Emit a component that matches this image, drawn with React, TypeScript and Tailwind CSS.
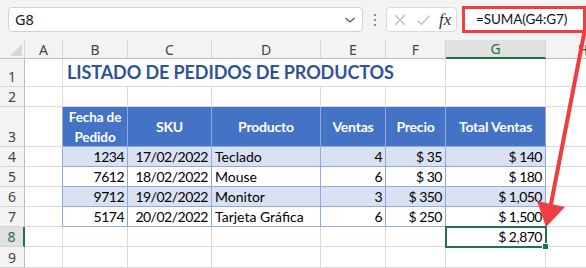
import React from "react";

const F = "font-['Lato',sans-serif]";
const UI = "font-['Noto_Sans',sans-serif]";

type Row = [string, string, string, string, string, string];
const data: Row[] = [
  ["1234", "17/02/2022", "Teclado", "4", "$ 35", "$ 140"],
  ["7612", "18/02/2022", "Mouse", "6", "$ 30", "$ 180"],
  ["9712", "19/02/2022", "Monitor", "3", "$ 350", "$ 1,050"],
  ["5174", "20/02/2022", "Tarjeta Gráfica", "6", "$ 250", "$ 1,500"],
];

function RowHead({ n, active }: { n: number; active?: boolean }) {
  return active ? (
    <div className={`${UI} flex items-end justify-center border-b border-b-[#d4d4d4] border-r-2 border-r-[#217346] bg-[#e1e1e1] text-[14px] leading-[19px] text-[#217346]`}>
      {n}
    </div>
  ) : (
    <div className={`${UI} flex items-end justify-center border-b border-r border-b-[#d4d4d4] border-r-[#bdbdbd] bg-[#f3f3f3] text-[14px] leading-[19px] text-[#444]`}>
      {n}
    </div>
  );
}

const grid = "border-r border-b border-[#dadada] bg-white";

export default function App() {
  return (
    <div className="relative h-[268px] w-[586px] overflow-hidden bg-[#f3f3f3]">
      {/* formula bar */}
      <div className="flex h-[40px] items-start pl-[8px] pt-[7px]">
        <div className="flex h-[25px] w-[355px] items-center justify-between rounded-[4px] border border-[#d2d2d2] bg-white pl-[6px] pr-[6px]">
          <span className={`${UI} text-[14.5px] text-[#222]`}>G8</span>
          <svg width="12" height="8" viewBox="0 0 12 8">
            <path d="M1.5 2 L6 6 L10.5 2" fill="none" stroke="#555" strokeWidth="1.3" />
          </svg>
        </div>
        <div className="flex h-[25px] w-[23px] flex-col items-center justify-center gap-[3px]">
          <span className="h-[2px] w-[2px] bg-[#8a8a8a]" />
          <span className="h-[2px] w-[2px] bg-[#8a8a8a]" />
          <span className="h-[2px] w-[2px] bg-[#8a8a8a]" />
        </div>
        <div className="flex h-[25px] w-[71px] items-center rounded-[4px] border border-[#dcdcdc] bg-white pl-[6px]">
          <svg width="14" height="14" viewBox="0 0 14 14">
            <path d="M2 2 L12 12 M12 2 L2 12" stroke="#bdbdbd" strokeWidth="1.2" fill="none" />
          </svg>
          <svg className="ml-[9px]" width="15" height="14" viewBox="0 0 15 14">
            <path d="M1.5 7.5 L5.5 11.5 L13.5 2.5" stroke="#bdbdbd" strokeWidth="1.2" fill="none" />
          </svg>
          <span className="ml-[8px] font-['Liberation_Serif',serif] text-[17px] italic leading-none text-[#333]">fx</span>
        </div>
        <div className="ml-[5px] mt-[-1px] flex h-[27px] flex-1 items-center border-[3px] border-[#ef3e42] bg-white pl-[11px]">
          <span className={`${F} text-[13.5px] tracking-[-0.1px] text-[#111]`}>=SUMA(G4:G7)</span>
        </div>
      </div>

      {/* sheet grid */}
      <div className="grid w-[620px] grid-cols-[25px_38px_65px_84px_109px_65px_60px_100px_74px] grid-rows-[19px_28px_20px_40px_20px_20px_20px_20px_20px_21px] bg-white">
        {/* column headers */}
        <div className="relative border-b border-r border-b-[#bdbdbd] border-r-[#d4d4d4] bg-[#f3f3f3]">
          <svg className="absolute left-0 top-0" width="25" height="19" viewBox="0 0 25 19">
            <polygon points="22,4 22,16 10,16" fill="#d6d6d6" />
          </svg>
        </div>
        {["A", "B", "C", "D", "E", "F"].map((c) => (
          <div key={c} className={`${UI} flex items-center justify-center border-b border-r border-b-[#bdbdbd] border-r-[#d4d4d4] bg-[#f3f3f3] text-[14px] text-[#444]`}>
            {c}
          </div>
        ))}
        <div className={`${UI} flex items-center justify-center border-b-2 border-r border-b-[#217346] border-r-[#d4d4d4] bg-[#e1e1e1] text-[14px] text-[#217346]`}>
          G
        </div>
        <div className={`${UI} flex items-center justify-center border-b border-b-[#bdbdbd] bg-[#f3f3f3] text-[14px] text-[#444]`}>
          H
        </div>

        {/* row 1 */}
        <RowHead n={1} />
        <div className={grid} />
        <div className="col-span-5 flex items-end border-b border-r border-[#dadada] bg-white pb-[1px] pl-[4px]">
          <span className={`${F} whitespace-nowrap text-[18px] font-bold leading-[26px] tracking-[-0.1px] text-[#2f5496]`}>
            LISTADO DE PEDIDOS DE PRODUCTOS
          </span>
        </div>
        <div className={grid} />
        <div className="border-b border-[#dadada] bg-white" />

        {/* row 2 */}
        <RowHead n={2} />
        <div className={grid} />
        <div className={grid} />
        <div className={grid} />
        <div className={grid} />
        <div className={grid} />
        <div className={grid} />
        <div className={grid} />
        <div className="border-b border-[#dadada] bg-white" />

        {/* row 3 header */}
        <RowHead n={3} />
        <div className="border-b border-r border-b-[#dadada] border-r-[#8ea9db] bg-white" />
        <div className={`${F} flex flex-col items-center justify-center border-b border-r border-[#8ea9db] bg-[#4472c4] text-[13.5px] font-bold leading-[20px] tracking-[-0.1px] text-white`}>
          <span>Fecha de</span>
          <span>Pedido</span>
        </div>
        {["SKU", "Producto", "Ventas", "Precio", "Total Ventas"].map((h) => (
          <div key={h} className={`${F} flex items-center justify-center border-b border-r border-[#8ea9db] bg-[#4472c4] text-[14px] font-bold tracking-[-0.2px] text-white`}>
            {h}
          </div>
        ))}
        <div className="border-b border-[#dadada] bg-white" />

        {/* rows 4-7 */}
        {data.map((r, i) => {
          const band = i % 2 === 0;
          const bg = band ? "bg-[#d9e1f2]" : "bg-white";
          return (
            <React.Fragment key={i}>
              <RowHead n={i + 4} />
              <div className="border-b border-r border-b-[#dadada] border-r-[#8ea9db] bg-white" />
              {r.map((v, j) => (
                <div
                  key={j}
                  className={`${F} ${bg} flex items-center whitespace-nowrap border-b border-r border-[#8ea9db] text-[14px] text-black ${
                    j === 2 ? "justify-start pl-[3px] tracking-[0px]" : "justify-end pr-[3px] tracking-[-0.5px]"
                  }`}
                >
                  {v}
                </div>
              ))}
              <div className="border-b border-[#dadada] bg-white" />
            </React.Fragment>
          );
        })}

        {/* row 8 */}
        <RowHead n={8} active />
        <div className={grid} />
        <div className={grid} />
        <div className={grid} />
        <div className={grid} />
        <div className={grid} />
        <div className={grid} />
        <div className={`${F} relative flex items-center justify-end border-b border-r border-[#dadada] bg-white pr-[3px] text-[14px] tracking-[-0.5px] text-black`}>
          $ 2,870
          <div className="pointer-events-none absolute left-[-1px] top-[-1px] h-[22px] w-[102px] border-2 border-[#217346]" />
          <div className="pointer-events-none absolute bottom-[-4px] right-[-4px] h-[7px] w-[7px] border border-white bg-[#217346]" />
        </div>
        <div className="border-b border-[#dadada] bg-white" />

        {/* row 9 */}
        <RowHead n={9} />
        <div className={grid} />
        <div className={grid} />
        <div className={grid} />
        <div className={grid} />
        <div className={grid} />
        <div className={grid} />
        <div className={grid} />
        <div className="border-b border-[#dadada] bg-white" />
      </div>

      {/* red arrow overlay */}
      <svg className="pointer-events-none absolute left-0 top-0" width="586" height="268" viewBox="0 0 586 268">
        <line x1="584" y1="34" x2="551" y2="204" stroke="#ef3e42" strokeWidth="4" strokeLinecap="round" />
        <polygon points="537,201 565,207 546,227" fill="#ef3e42" />
      </svg>
    </div>
  );
}
